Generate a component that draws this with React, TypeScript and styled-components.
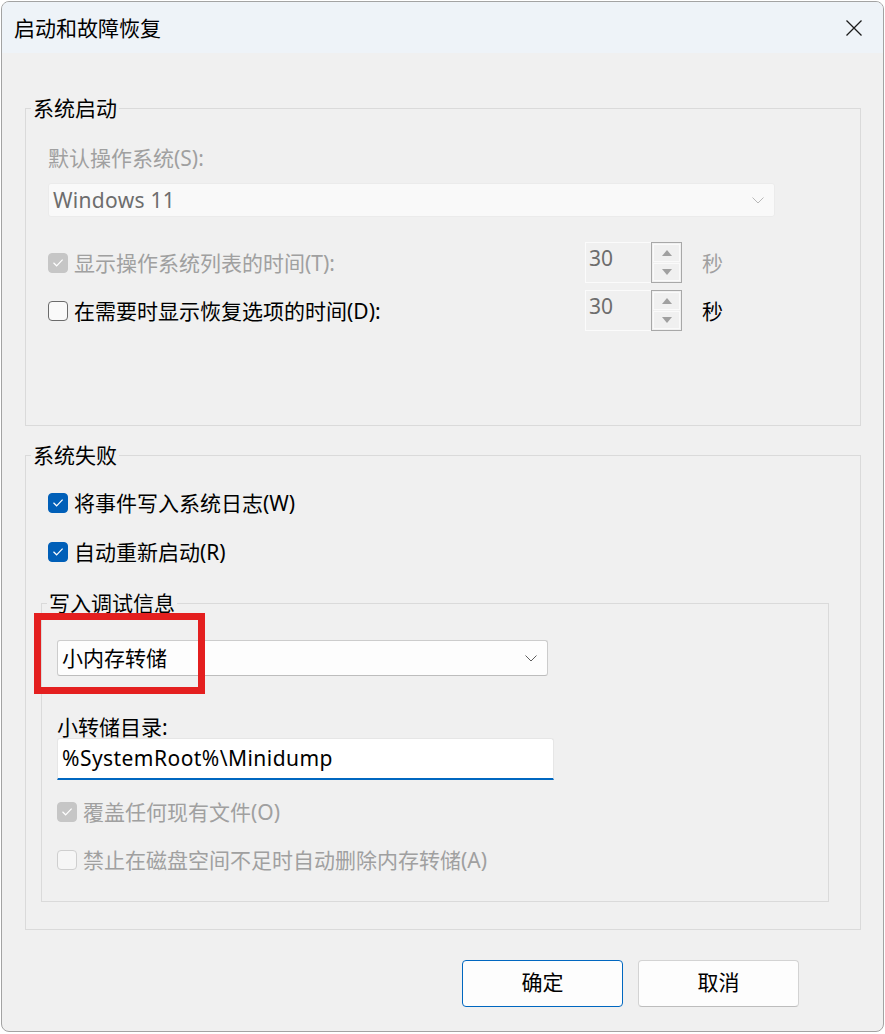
import React from "react";
import styled, { createGlobalStyle } from "styled-components";

const Global = createGlobalStyle`
  html, body { margin: 0; padding: 0; background: #ffffff; }
  body {
    font-family: "Noto Sans", "Noto Sans CJK SC", sans-serif;
    font-size: 21px;
    color: #000000;
  }
  #root { width: 885px; height: 1034px; overflow: hidden; }
`;

const Dialog = styled.div`
  box-sizing: border-box;
  margin: 1px 0 0 1px;
  width: 883px;
  height: 1031px;
  border: 1px solid #a3a3a3;
  border-radius: 8px;
  background: #f0f0f0;
  overflow: hidden;
  display: flex;
  flex-direction: column;
`;

const TitleBar = styled.div`
  flex: none;
  height: 51px;
  background: #eef3f8;
  display: flex;
  align-items: center;
  justify-content: space-between;
  padding: 0 21px 0 12px;
`;

const Title = styled.div`
  font-size: 21px;
  line-height: 26px;
  color: #000;
`;

const Body = styled.div`
  flex: 1;
  display: flex;
  flex-direction: column;
  padding: 55px 22px 0 23px;
`;

const Group = styled.div<{ $h: number; $mt?: number; $pl: number }>`
  position: relative;
  box-sizing: border-box;
  height: ${(p) => p.$h}px;
  margin-top: ${(p) => p.$mt ?? 0}px;
  border: 1px solid #dadada;
  display: flex;
  flex-direction: column;
  align-items: flex-start;
  padding-left: ${(p) => p.$pl}px;
`;

const SubGroup = styled(Group)`
  margin-left: -7px;
  width: 788px;
`;

const Legend = styled.div<{ $ml: number }>`
  margin: -14px 0 0 ${(p) => p.$ml}px;
  padding: 0 2px;
  background: #f0f0f0;
  line-height: 26px;
  height: 26px;
`;

const FieldLabel = styled.div<{ $mt: number; $lh: number; $disabled?: boolean }>`
  margin-top: ${(p) => p.$mt}px;
  line-height: ${(p) => p.$lh}px;
  height: ${(p) => p.$lh}px;
  color: ${(p) => (p.$disabled ? "#a0a0a0" : "#000")};
`;

const Combo = styled.div<{ $w: number; $h: number; $mt: number; $disabled?: boolean }>`
  box-sizing: border-box;
  margin-top: ${(p) => p.$mt}px;
  width: ${(p) => p.$w}px;
  height: ${(p) => p.$h}px;
  display: flex;
  align-items: center;
  justify-content: space-between;
  padding: 0 10px 0 4px;
  border-radius: 3px;
  background: ${(p) => (p.$disabled ? "#f9f9f9" : "#fdfdfd")};
  border: 1px solid ${(p) => (p.$disabled ? "#ebebeb" : "#cccccc")};
  border-bottom-color: ${(p) => (p.$disabled ? "#ebebeb" : "#bdbdbd")};
  color: ${(p) => (p.$disabled ? "#6d6d6d" : "#000")};
  line-height: 26px;
  letter-spacing: ${(p) => (p.$disabled ? "0.3px" : "0")};
`;

const TextInput = styled.div`
  box-sizing: border-box;
  width: 497px;
  height: 42px;
  background: #ffffff;
  border: 1px solid #e6e6e6;
  border-bottom: 2px solid #0067c0;
  border-radius: 3px 3px 0 0;
  padding: 5px 0 0 4px;
  line-height: 28px;
  letter-spacing: 0.45px;
  color: #000;
`;

const SpinRow = styled.div<{ $mt: number }>`
  margin-top: ${(p) => p.$mt}px;
  height: 41px;
  display: grid;
  grid-template-columns: 537px 97px auto;
  align-items: center;
`;

const CheckRow = styled.div<{ $mt: number }>`
  margin-top: ${(p) => p.$mt}px;
  height: 28px;
  display: flex;
  align-items: center;
`;

const CheckItem = styled.div<{ $disabled?: boolean }>`
  display: flex;
  align-items: center;
  gap: 6px;
  line-height: 26px;
  color: ${(p) => (p.$disabled ? "#a0a0a0" : "#000")};
`;

const Box = styled.div<{ $state: "on" | "off" | "dis-on" | "dis-off" }>`
  position: relative;
  box-sizing: border-box;
  width: 20px;
  height: 20px;
  border-radius: 4px;
  flex: none;
  display: flex;
  align-items: center;
  justify-content: center;
  background: ${(p) =>
    p.$state === "on" ? "#005fb8" : p.$state === "dis-on" ? "#c6c6c6" : p.$state === "off" ? "#f9f9f9" : "#f6f6f6"};
  border: 1px solid
    ${(p) =>
      p.$state === "on" ? "#005fb8" : p.$state === "dis-on" ? "#c6c6c6" : p.$state === "off" ? "#6b6b6b" : "#cfcfcf"};
`;

const Spinner = styled.div`
  display: flex;
  height: 41px;
  width: 97px;
  box-sizing: border-box;
`;

const SpinEdit = styled.div`
  box-sizing: border-box;
  width: 66px;
  height: 41px;
  background: #f0f0f0;
  border: 1px solid #fbfbfb;
  border-right: none;
  padding: 2px 0 0 3px;
  line-height: 26px;
  color: #6d6d6d;
`;

const SpinButtons = styled.div`
  box-sizing: border-box;
  width: 31px;
  height: 41px;
  border: 1px solid #a8a8a8;
  padding: 1px;
  display: flex;
  flex-direction: column;
  gap: 1px;
`;

const SpinBtn = styled.div`
  flex: 1;
  box-sizing: border-box;
  border: 1px solid #fafafa;
  background: #f0f0f0;
  display: flex;
  align-items: center;
  justify-content: center;
`;

const Unit = styled.div<{ $disabled?: boolean }>`
  margin-left: 20px;
  line-height: 26px;
  color: ${(p) => (p.$disabled ? "#a0a0a0" : "#000")};
`;

const Annotation = styled.div`
  position: absolute;
  left: -8px;
  top: 9px;
  width: 171px;
  height: 81px;
  box-sizing: border-box;
  border: 7px solid #e41f1f;
  pointer-events: none;
`;

const ButtonRow = styled.div`
  margin-top: 30px;
  display: flex;
  justify-content: flex-end;
  gap: 15px;
  padding-right: 62px;
`;

const Button = styled.button<{ $default?: boolean }>`
  box-sizing: border-box;
  width: 161px;
  height: 47px;
  border-radius: 4px;
  background: #fdfdfd;
  border: 1px solid ${(p) => (p.$default ? "#0067c0" : "#d3d3d3")};
  border-bottom-color: ${(p) => (p.$default ? "#0067c0" : "#bdbdbd")};
  font-family: inherit;
  font-size: 21px;
  line-height: 26px;
  color: #000;
  padding: 0 0 3px 0;
`;

const CheckMark = styled.svg`
  position: absolute;
  left: -1px;
  top: -1px;
`;

const CheckBox = ({ state }: { state: "on" | "off" | "dis-on" | "dis-off" }) => (
  <Box $state={state}>
    {(state === "on" || state === "dis-on") && (
      <CheckMark width="20" height="20" viewBox="0 0 20 20">
        <polyline points="5.5,9.8 8.6,12.8 14.6,6.6" fill="none" stroke="#ffffff" strokeWidth="1.2" />
      </CheckMark>
    )}
  </Box>
);

const Chevron = ({ color }: { color: string }) => (
  <svg width="12" height="7" viewBox="0 0 12 7">
    <polyline points="0.5,0.5 6,6 11.5,0.5" fill="none" stroke={color} strokeWidth="1" />
  </svg>
);

const Arrow = ({ up }: { up?: boolean }) => (
  <svg width="10" height="6" viewBox="0 0 10 6">
    <polygon points={up ? "0,6 10,6 5,0" : "0,0 10,0 5,6"} fill="#a0a0a0" />
  </svg>
);

const SpinBox = ({ value }: { value: string }) => (
  <Spinner>
    <SpinEdit>{value}</SpinEdit>
    <SpinButtons>
      <SpinBtn>
        <Arrow up />
      </SpinBtn>
      <SpinBtn>
        <Arrow />
      </SpinBtn>
    </SpinButtons>
  </Spinner>
);

export default function App() {
  return (
    <>
      <Global />
      <Dialog>
        <TitleBar>
          <Title>启动和故障恢复</Title>
          <svg width="16" height="16" viewBox="0 0 16 16">
            <path d="M0.5 0.5 L15.5 15.5 M15.5 0.5 L0.5 15.5" stroke="#1b1b1b" strokeWidth="1.3" fill="none" />
          </svg>
        </TitleBar>
        <Body>
          <Group $h={318} $pl={22}>
            <Legend $ml={-17}>系统启动</Legend>
            <FieldLabel $mt={24} $lh={26} $disabled>
              默认操作系统(S):
            </FieldLabel>
            <Combo $w={727} $h={34} $mt={12} $disabled>
              <span>Windows 11</span>
              <Chevron color="#b8b8b8" />
            </Combo>
            <SpinRow $mt={25}>
              <CheckItem $disabled>
                <CheckBox state="dis-on" />
                显示操作系统列表的时间(T):
              </CheckItem>
              <SpinBox value="30" />
              <Unit $disabled>秒</Unit>
            </SpinRow>
            <SpinRow $mt={7}>
              <CheckItem>
                <CheckBox state="off" />
                在需要时显示恢复选项的时间(D):
              </CheckItem>
              <SpinBox value="30" />
              <Unit>秒</Unit>
            </SpinRow>
          </Group>
          <Group $h={475} $mt={29} $pl={22}>
            <Legend $ml={-17}>系统失败</Legend>
            <CheckRow $mt={21}>
              <CheckItem>
                <CheckBox state="on" />
                将事件写入系统日志(W)
              </CheckItem>
            </CheckRow>
            <CheckRow $mt={21}>
              <CheckItem>
                <CheckBox state="on" />
                自动重新启动(R)
              </CheckItem>
            </CheckRow>
            <SubGroup $h={299} $mt={37} $pl={15}>
              <Legend $ml={-10}>写入调试信息</Legend>
              <Combo $w={491} $h={36} $mt={24}>
                <span>小内存转储</span>
                <Chevron color="#5f5f5f" />
              </Combo>
              <FieldLabel $mt={40} $lh={22}>
                小转储目录:
              </FieldLabel>
              <TextInput>%SystemRoot%\Minidump</TextInput>
              <CheckRow $mt={18}>
                <CheckItem $disabled>
                  <CheckBox state="dis-on" />
                  覆盖任何现有文件(O)
                </CheckItem>
              </CheckRow>
              <CheckRow $mt={20}>
                <CheckItem $disabled>
                  <CheckBox state="dis-off" />
                  禁止在磁盘空间不足时自动删除内存转储(A)
                </CheckItem>
              </CheckRow>
              <Annotation />
            </SubGroup>
          </Group>
          <ButtonRow>
            <Button $default>确定</Button>
            <Button>取消</Button>
          </ButtonRow>
        </Body>
      </Dialog>
    </>
  );
}
